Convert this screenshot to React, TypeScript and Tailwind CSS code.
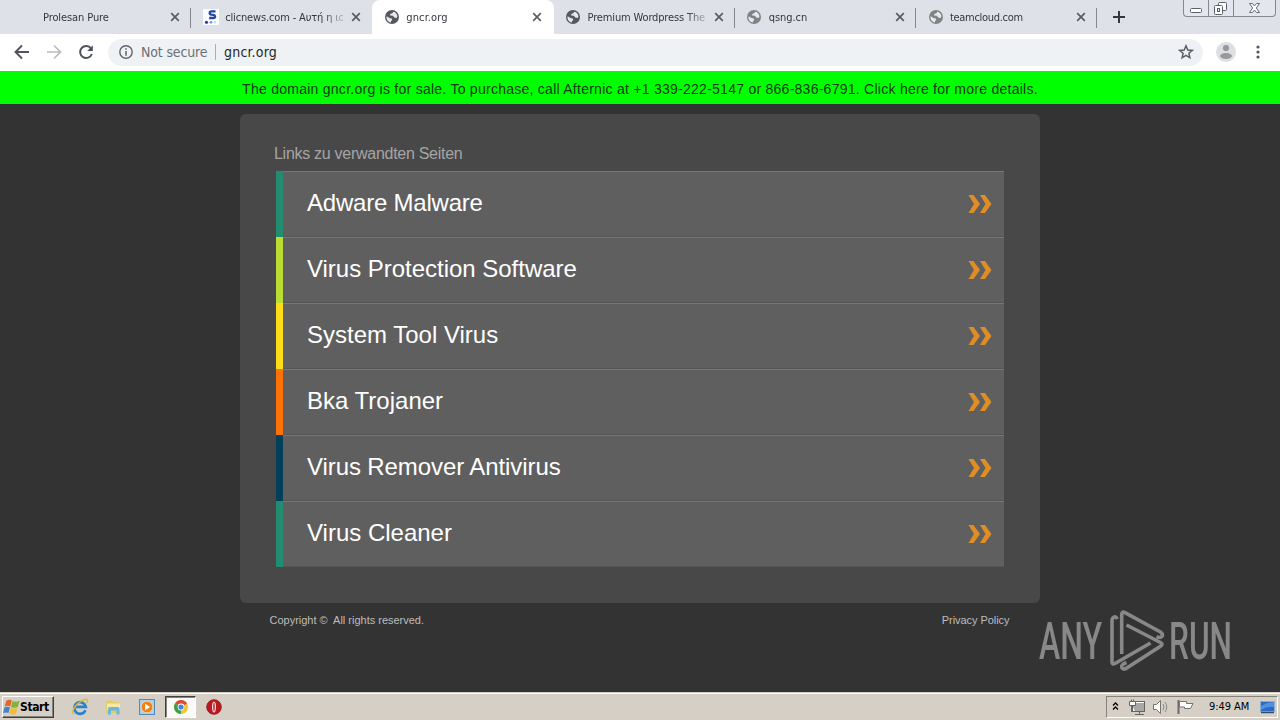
import type { ReactNode } from 'react';
import clsx from 'clsx';

type Favicon = 'none' | 'clic' | 'globe' | 'globe-dim';

const tabs: { title: string; icon: Favicon; active?: boolean; divider?: boolean; tracking: string }[] = [
  { title: 'Prolesan Pure', icon: 'none', divider: true, tracking: 'tracking-[-0.1px] -ml-px' },
  { title: 'clicnews.com - Αυτή η ισ', icon: 'clic', tracking: 'tracking-[-0.15px]' },
  { title: 'gncr.org', icon: 'globe', active: true, tracking: 'tracking-[0.1px]' },
  { title: 'Premium Wordpress The', icon: 'globe', divider: true, tracking: 'tracking-[-0.15px]' },
  { title: 'qsng.cn', icon: 'globe-dim', divider: true, tracking: 'tracking-[-0.05px]' },
  { title: 'teamcloud.com', icon: 'globe-dim', divider: true, tracking: 'tracking-[-0.3px]' },
];

const links = [
  { label: 'Adware Malware', bar: 'bg-[#218c6f]', tracking: 'tracking-[-0.22px]' },
  { label: 'Virus Protection Software', bar: 'bg-[#bbdc33]', tracking: 'tracking-[-0.02px]' },
  { label: 'System Tool Virus', bar: 'bg-[#ffdd1a]', tracking: 'tracking-[0px]' },
  { label: 'Bka Trojaner', bar: 'bg-[#fc7206]', tracking: 'tracking-[0px]' },
  { label: 'Virus Remover Antivirus', bar: 'bg-[#043f5a]', tracking: 'tracking-[-0.09px]' },
  { label: 'Virus Cleaner', bar: 'bg-[#218c6f]', tracking: 'tracking-[0px]' },
];

const Globe = ({ dim }: { dim?: boolean }) => (
  <svg width="16" height="16" viewBox="0 0 16 16">
    <circle cx="8" cy="8" r="7" fill={dim ? '#808285' : '#55585d'} />
    <path d="M2.6 7.2 L6 9.2 L7.8 9.5 L8.2 11.2 L7 12 L6.9 13.5 C4 13 2 10.4 2.6 7.2Z" fill="#e6e8ec" />
    <path d="M9.4 2.7 L8.3 4.2 L6.3 4.9 L6.1 6.5 L8.9 6.7 L10.3 8.6 L12.7 9 L13.4 7.4 C13.3 5 11.7 3.2 9.4 2.7Z" fill="#e6e8ec" />
  </svg>
);

const TabIcon = ({ icon }: { icon: Favicon }) => {
  if (icon === 'none') return <span className="w-4" />;
  if (icon === 'clic') {
    return (
      <svg width="16" height="16" viewBox="0 0 16 16">
        <rect width="16" height="16" fill="#fdfdff" />
        <path d="M12.5 2.4 H8.3 Q6.7 2.4 6.7 4 Q6.7 5.4 8.4 5.6 L10.5 5.8 Q12.1 6 12.1 7.5 Q12.1 9 10.3 9 H6.2" fill="none" stroke="#2546a4" strokeWidth="2.3" />
        <circle cx="3.5" cy="13.3" r="1.6" fill="#2143a8" />
        <circle cx="8" cy="13.3" r="1.4" fill="#7c9bd2" />
        <circle cx="12" cy="13.3" r="1.3" fill="#c6dcf2" />
      </svg>
    );
  }
  return <Globe dim={icon === 'globe-dim'} />;
};

const TabClose = () => (
  <svg width="10" height="10" viewBox="0 0 10 10" className="shrink-0">
    <path d="M1.2 1.2 L8.8 8.8 M8.8 1.2 L1.2 8.8" stroke="#5a5d62" strokeWidth="1.7" />
  </svg>
);

const TabStrip = () => (
  <div className="relative flex h-[34px] bg-[#dee1e8] pl-[10px]">
    {tabs.map((tab) => (
      <div
        key={tab.title}
        className={clsx(
          'relative flex w-[181.2px] shrink-0 items-center pl-[11.6px]',
          tab.active && 'rounded-t-[8px] bg-white',
        )}
      >
        <TabIcon icon={tab.icon} />
        <span className="ml-[6.4px] w-[118px] shrink-0 whitespace-nowrap pt-px font-['DejaVu_Sans_Condensed','DejaVu_Sans',sans-serif] text-[11px] leading-4 text-[#34373c] [font-stretch:condensed] [mask-image:linear-gradient(to_right,black_98px,transparent_124px)]">
          <span className={clsx('inline-block', tab.tracking)}>{tab.title}</span>
        </span>
        <span className="ml-[8px]">
          <TabClose />
        </span>
        {tab.divider && <span className="absolute right-0 top-2 h-5 w-px bg-[#85888e]" />}
      </div>
    ))}
    <svg width="12" height="12" viewBox="0 0 12 12" className="ml-[16px] mt-[11px]">
      <path d="M6 0 V12 M0 6 H12" stroke="#34373c" strokeWidth="2" />
    </svg>
    <WindowButtons />
  </div>
);

const WindowButtons = () => (
  <div className="ml-auto mr-[4px] flex h-[17px] w-[93px] rounded-b-[4px] border border-t-0 border-[#85888f] bg-[#e3e6ec]">
    <span className="w-[25px] border-r border-[#85888f]">
      <svg width="24" height="16" viewBox="0 0 24 16">
        <rect x="6.5" y="8.5" width="11" height="4" rx="1" fill="#fff" stroke="#5c6068" />
      </svg>
    </span>
    <span className="w-[25px] border-r border-[#85888f]">
      <svg width="24" height="16" viewBox="0 0 24 16">
        <rect x="9.5" y="2.5" width="8" height="8" rx="1" fill="#fff" stroke="#5c6068" />
        <rect x="5.5" y="5.5" width="8" height="9" rx="1" fill="#fff" stroke="#5c6068" />
        <rect x="8.5" y="8.5" width="2" height="3" fill="#e3e6ec" stroke="#5c6068" />
      </svg>
    </span>
    <svg width="41" height="16" viewBox="0 0 41 16">
      <path d="M15.5 3.5 H18.5 L20.5 6 L22.5 3.5 H25.5 L22.3 8 L25.5 12.5 H22.5 L20.5 10 L18.5 12.5 H15.5 L18.7 8Z" fill="#fff" stroke="#686c74" />
    </svg>
  </div>
);

const Toolbar = () => (
  <div className="flex h-[37px] items-center bg-white pb-px font-['DejaVu_Sans_Condensed','DejaVu_Sans',sans-serif] [font-stretch:condensed]">
    <svg width="108" height="36" viewBox="0 0 108 36" fill="none">
      <path d="M29 18 H16 M22 11.5 L15.5 18 L22 24.5" stroke="#50535a" strokeWidth="1.9" />
      <path d="M47 18 H60 M54 11.5 L60.5 18 L54 24.5" stroke="#b8babe" strokeWidth="1.7" />
      <path d="M91 14.5 A6 6 0 1 0 91.8 20" stroke="#50535a" strokeWidth="2" />
      <path d="M92.9 11.3 V17 H87.2Z" fill="#50535a" />
    </svg>
    <div className="flex h-[27px] w-[1095px] items-center rounded-full bg-[#eff2f5] pl-[11px] text-[14px] leading-5">
      <svg width="14" height="14" viewBox="0 0 14 14">
        <circle cx="7" cy="7" r="6.2" fill="none" stroke="#606368" strokeWidth="1.4" />
        <path d="M7 3.2 V4.8 M7 6 V10.8" stroke="#606368" strokeWidth="1.5" />
      </svg>
      <span className="ml-[8px] w-[67px] whitespace-nowrap tracking-[-0.15px] text-[#6c6f74]">Not secure</span>
      <span className="ml-[7px] h-4 w-px bg-[#aaaeb3]" />
      <span className="ml-[8px] tracking-[0.2px] text-[#25282c]">gncr.org</span>
      <svg width="16" height="16" viewBox="0 0 16 16" className="ml-auto mr-[9px]">
        <path d="M8 1.8 L9.8 6 L14.3 6.4 L10.9 9.3 L11.9 13.8 L8 11.4 L4.1 13.8 L5.1 9.3 L1.7 6.4 L6.2 6Z" fill="none" stroke="#5b5e64" strokeWidth="1.5" />
      </svg>
    </div>
    <svg width="20" height="20" viewBox="0 0 20 20" className="ml-[13px]">
      <circle cx="10" cy="10" r="10" fill="#dddfe0" />
      <circle cx="10" cy="6" r="3.1" fill="#97999c" />
      <ellipse cx="10" cy="14" rx="6" ry="2.9" fill="#97999c" />
    </svg>
    <svg width="4" height="14" viewBox="0 0 4 14" className="ml-[20px]">
      <circle cx="2" cy="2" r="1.6" fill="#55585d" />
      <circle cx="2" cy="7" r="1.6" fill="#55585d" />
      <circle cx="2" cy="12" r="1.6" fill="#55585d" />
    </svg>
  </div>
);

const Chevrons = () => (
  <svg width="24" height="20" viewBox="0 0 24 20" className="ml-auto mr-[12px]">
    <path d="M0.5 1 H5.5 L12 10 L5.5 19 H0.5 L6 10Z" fill="#df8d25" />
    <path d="M12 1 H17 L23.5 10 L17 19 H12 L17.5 10Z" fill="#df8d25" />
  </svg>
);

const AnyRun = () => (
  <svg width="220" height="66" viewBox="0 0 220 66" className="absolute left-[1037px] top-[504px] opacity-90">
    <g fill="#929292" fontFamily="Roboto, sans-serif" fontWeight="500" fontSize="52">
      <text x="2" y="51" textLength="63" lengthAdjust="spacingAndGlyphs">ANY</text>
      <text x="132" y="51" textLength="63" lengthAdjust="spacingAndGlyphs">RUN</text>
    </g>
    <g fill="none" stroke="#929292" strokeWidth="3.6" strokeLinejoin="round">
      <path d="M80.3 11 Q79 8.5 77 9 Q75 10 75 12.5 V54 Q75 57 78 55.5 L113.5 35" />
      <path d="M84.7 46 V6.5 Q84.7 3 88 4.7 L123.5 24 Q126 26 125.3 28 Q123.5 30.5 119.5 28.7" />
      <path d="M89.5 17 L123.5 34.5 Q126.5 36.3 123.5 38.3 L89 60.5 Q85.5 62 84.7 59 Q84.3 56.5 89.5 54.5" />
    </g>
  </svg>
);

const Page = () => (
  <main className="relative h-[588px] bg-[#333] pt-[10px] font-['Liberation_Sans',Arial,sans-serif]">
    <section className="mx-auto h-[489px] w-[800px] rounded-[6px] bg-[#484848] px-9 pt-[30px]">
      <h1 className="-ml-[2px] h-[27px] text-[16px] leading-[20px] tracking-[-0.28px] text-[#a5a5a5]">
        Links zu verwandten Seiten
      </h1>
      <ul>
        {links.map((link) => (
          <li key={link.label} className="flex h-[66px]">
            <span className={clsx('w-[7px]', link.bar)} />
            <a className="flex flex-1 items-center border-b border-t border-b-[#555] border-t-[#777] bg-[#5f5f5f] pl-6">
              <span className={clsx('-mt-[2px] text-[24px] leading-7 text-white', link.tracking)}>{link.label}</span>
              <Chevrons />
            </a>
          </li>
        ))}
      </ul>
    </section>
    <footer className="mx-auto flex w-[741px] justify-between pt-[10px] text-[11px] leading-[14px] text-[#bdbdbd]">
      <span className="tracking-[-0.01px]">Copyright ©&nbsp; All rights reserved.</span>
      <span className="mr-px tracking-[-0.05px]">Privacy Policy</span>
    </footer>
    <AnyRun />
  </main>
);

const IeIcon = () => (
  <svg width="18" height="18" viewBox="0 0 18 18" fill="none">
    <path d="M14.5 12.2 A5.8 5.8 0 1 1 14.8 8.8 H5" stroke="#2684cf" strokeWidth="2.7" />
    <path d="M3 16 C-1 15 4 7 10 3.2 C15 0 18 1 15.6 5" stroke="#e5b62f" strokeWidth="1.4" />
  </svg>
);

const FolderIcon = () => (
  <svg width="16" height="16" viewBox="0 0 16 16">
    <path d="M1 3 L2 1.5 H7 L8 3 H14 V14 H1Z" fill="#e3cb68" />
    <path d="M2 4.5 H15 V11 H2Z" fill="#f6e9a5" />
    <path d="M3 15.5 V9.5 Q3 8 4.5 8 H13 Q14.5 8 14.5 9.5 V15.5 H11.5 V11.5 H6 V15.5Z" fill="#6bb6dc" />
  </svg>
);

const MediaIcon = () => (
  <svg width="16" height="16" viewBox="0 0 16 16">
    <rect x="0.5" y="0.5" width="15" height="15" fill="#a9ceee" stroke="#5488bd" />
    <circle cx="8" cy="8" r="5.8" fill="#ef8116" stroke="#fbd5a2" strokeWidth="0.8" />
    <path d="M6.2 4.8 L11 8 L6.2 11.2Z" fill="#fff" />
  </svg>
);

const ChromeIcon = () => (
  <svg width="14" height="14" viewBox="0 0 14 14">
    <circle cx="7" cy="7" r="7" fill="#f2c431" />
    <path d="M7 7 L0.94 3.5 A7 7 0 0 1 13.06 3.5Z" fill="#dd4a3c" />
    <path d="M7 7 L0.94 3.5 A7 7 0 0 0 7 14Z" fill="#34a153" />
    <circle cx="7" cy="7" r="3.4" fill="#fff" />
    <circle cx="7" cy="7" r="2.6" fill="#4382e3" />
  </svg>
);

const OperaIcon = () => (
  <svg width="16" height="16" viewBox="0 0 16 16">
    <circle cx="8" cy="8" r="7.3" fill="#bd1720" stroke="#851017" strokeWidth="0.8" />
    <ellipse cx="8" cy="8" rx="2" ry="5.6" fill="#f6e8e8" />
    <ellipse cx="8" cy="8" rx="0.7" ry="4.4" fill="#a8141c" />
  </svg>
);

const WindowsFlag = () => (
  <svg width="17" height="16" viewBox="0 0 16 15" className="shrink-0">
    <path d="M3.2 1.6 Q6 0 8.3 1.4 L6.9 7 Q4.4 5.7 1.6 7.1Z" fill="#e4642b" />
    <path d="M9 1.8 Q12 3.4 15.6 1.7 L13.9 7.6 Q10.8 8.9 7.6 7.4Z" fill="#7fb43d" />
    <path d="M1.4 7.9 Q4 6.6 6.6 7.8 L5.2 13.2 Q2.8 12 0 13.4Z" fill="#4384c9" />
    <path d="M7.4 8.2 Q10.5 9.7 13.6 8.4 L12.1 14 Q9 15.3 6 13.7Z" fill="#f0bd33" />
  </svg>
);

const Slot = ({ children, className }: { children: ReactNode; className?: string }) => (
  <span className={clsx('flex items-center justify-center', className)}>{children}</span>
);

const Taskbar = () => (
  <div className="h-[28px] bg-[#d6cfc6] pt-px font-['DejaVu_Sans_Condensed','DejaVu_Sans',sans-serif] [font-stretch:condensed]">
    <div className="flex h-[27px] border-t border-white pt-[2px]">
      <button className="ml-[2px] flex h-[22px] w-[52px] items-center border border-b-[#404040] border-l-white border-r-[#404040] border-t-white text-[12px] font-bold tracking-[-0.4px] text-black shadow-[inset_-1px_-1px_#85827c]">
        <WindowsFlag />
        <span className="leading-4">Start</span>
      </button>
      <Slot className="ml-[16px] h-[22px] w-5"><IeIcon /></Slot>
      <Slot className="ml-[13px] h-[22px] w-5"><FolderIcon /></Slot>
      <Slot className="ml-[14px] h-[22px] w-5"><MediaIcon /></Slot>
      <Slot className="ml-[8px] h-[22px] w-[31px] border border-b-white border-l-[#404040] border-r-white border-t-[#404040] bg-[#fbfaf9] shadow-[inset_1px_1px_#85827c]">
        <ChromeIcon />
      </Slot>
      <Slot className="ml-[8px] h-[22px] w-5"><OperaIcon /></Slot>
      <div className="ml-auto mr-[2px] flex h-[22px] w-[172px] items-center border border-b-white border-l-[#85827c] border-r-white border-t-[#85827c]">
        <svg width="100" height="20" viewBox="0 0 100 20" fill="none">
          <path d="M6 8.5 L8.5 6 L11 8.5 M6 12.5 L8.5 10 L11 12.5" stroke="#000" strokeWidth="1.3" />
          <rect x="25.5" y="5.5" width="12" height="9" fill="#aaa9a6" stroke="#fff" />
          <rect x="24.5" y="4.5" width="13" height="10" stroke="#66645f" />
          <path d="M28 17.5 H37 M32.5 15 V17" stroke="#66645f" />
          <path d="M22.5 4.5 H28.5 V8.5 H22.5Z M24.5 2.5 V5 M26.5 2.5 V5 M25.5 9 V14.5 H28" fill="#fff" stroke="#66645f" />
          <path d="M46.5 7.5 H49.5 L53.5 3.5 V16.5 L49.5 12.5 H46.5Z" fill="#fff" stroke="#77756f" />
          <path d="M56 7 Q58 10 56 13 M58 5 Q61.5 10 58 15" stroke="#8b8983" />
          <path d="M71.5 3 V17" stroke="#6c6a65" strokeWidth="2" />
          <path d="M72.5 4.5 H79.5 V6.5 H86 L83.5 11.5 H77.5 V10 H72.5Z" fill="#fff" stroke="#77756f" />
        </svg>
        <span className="ml-[2px] w-[42px] whitespace-nowrap text-[11px] leading-4 tracking-[-0.05px] text-black">9:49 AM</span>
        <svg width="15" height="13" viewBox="0 0 15 13" className="ml-[9px]">
          <rect x="0.5" y="0.5" width="14" height="10" fill="#2c6ac5" stroke="#87adda" />
          <path d="M1 5 Q8 1 14 1 V6 Q7 5 1 9Z" fill="#548fdc" />
          <path d="M1 11.5 H14" stroke="#304c70" strokeWidth="1.5" />
        </svg>
      </div>
    </div>
  </div>
);

const App = () => (
  <div className="h-[720px] w-[1280px] overflow-hidden">
    <TabStrip />
    <Toolbar />
    <div className="h-[33px] bg-[#00ff00] pt-[8px] text-center font-['Liberation_Sans',Arial,sans-serif] text-[14px] leading-5 tracking-[0.26px] text-[#103810]">
      The domain gncr.org is for sale. To purchase, call Afternic at +1 339-222-5147 or 866-836-6791. Click here for more details.
    </div>
    <Page />
    <Taskbar />
  </div>
);

export default App;
